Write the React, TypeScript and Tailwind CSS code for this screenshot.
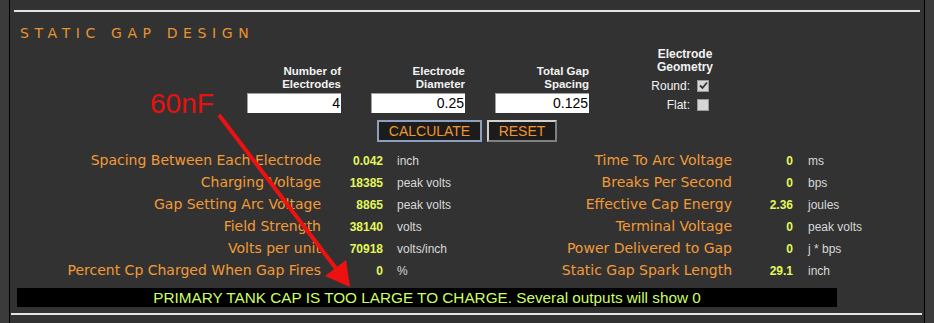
import React from 'react';

const leftRows = [
  ['Spacing Between Each Electrode', '0.042', 'inch'],
  ['Charging Voltage', '18385', 'peak volts'],
  ['Gap Setting Arc Voltage', '8865', 'peak volts'],
  ['Field Strength', '38140', 'volts'],
  ['Volts per unit', '70918', 'volts/inch'],
  ['Percent Cp Charged When Gap Fires', '0', '%'],
];

const rightRows = [
  ['Time To Arc Voltage', '0', 'ms'],
  ['Breaks Per Second', '0', 'bps'],
  ['Effective Cap Energy', '2.36', 'joules'],
  ['Terminal Voltage', '0', 'peak volts'],
  ['Power Delivered to Gap', '0', 'j * bps'],
  ['Static Gap Spark Length', '29.1', 'inch'],
];

const inputs = [
  ['Number of', 'Electrodes', '4'],
  ['Electrode', 'Diameter', '0.25'],
  ['Total Gap', 'Spacing', '0.125'],
];

const Checkbox: React.FC<{ checked?: boolean }> = ({ checked }) => (
  <div className="w-[12px] h-[12px] bg-[#d6d6d6] border border-[#9a9a9a] flex items-center justify-center">
    {checked && (
      <svg width="9" height="9" viewBox="0 0 9 9">
        <path d="M1 4.5 L3.5 7 L8 1.5" stroke="#333" strokeWidth="1.8" fill="none" />
      </svg>
    )}
  </div>
);

const ResultTable: React.FC<{ rows: string[][]; labelW: string; valueW: string; unitPad: string; width: string }> = ({
  rows,
  labelW,
  valueW,
  unitPad,
  width,
}) => (
  <div className={`flex flex-col ${width}`}>
    {rows.map(([label, value, unit]) => (
      <div key={label} className="flex items-baseline h-[22px] leading-[22px] whitespace-nowrap">
        <div className={`${labelW} shrink-0 text-right text-[14px] text-[#f29a36] font-['DejaVu_Sans',sans-serif]`}>{label}</div>
        <div className={`${valueW} shrink-0 text-right text-[12px] font-bold text-[#e2f75a] font-['Liberation_Sans',Arial,sans-serif]`}>
          {value}
        </div>
        <div className={`${unitPad} text-[12px] text-[#d8d8d8] font-['Liberation_Sans',Arial,sans-serif]`}>{unit}</div>
      </div>
    ))}
  </div>
);

export default function App() {
  return (
    <div className="relative w-[934px] h-[323px] bg-[#3b3b3b] flex overflow-hidden font-['Liberation_Sans',Arial,sans-serif]">
      <div className="w-[9px] shrink-0" />
      <div className="w-[916px] shrink-0 h-full bg-[#323232] border-x border-black flex flex-col">
        <div className="pt-[10px] pl-[4px]">
          <div className="h-[2px] w-[906px] bg-[#e4e4e4]" />
        </div>

        <div className="mt-[13px] pl-[10px] text-[14px] leading-[16px] tracking-[5.6px] text-[#e8932f] font-['DejaVu_Sans',sans-serif]">
          STATIC GAP DESIGN
        </div>

        <div className="flex items-start pl-[237px]">
          <div className="flex flex-col mt-[24px]">
            <div className="flex gap-[30px]">
              {inputs.map(([a, b, v]) => (
                <div key={a} className="flex flex-col w-[94px]">
                  <div className="text-right text-[11.5px] leading-[13px] font-bold text-[#f2f2f2]">
                    <div>{a}</div>
                    <div>{b}</div>
                  </div>
                  <div className="mt-[2px] h-[20px] bg-white border-t border-l border-[#a0a0a0] text-right text-[14px] leading-[19px] pr-[1px] text-black">
                    {v}
                  </div>
                </div>
              ))}
            </div>
            <div className="mt-[7px] pl-[130px] flex gap-[5px]">
              <button className="w-[105px] h-[22px] bg-[#1c1c1c] border-2 border-[#8e9fbd] text-[14px] leading-[18px] text-[#f0962c]">
                CALCULATE
              </button>
              <button className="w-[70px] h-[22px] bg-[#1c1c1c] border-2 border-t-[#d0d0d0] border-l-[#d0d0d0] border-b-[#808080] border-r-[#808080] text-[14px] leading-[18px] text-[#f0962c]">
                RESET
              </button>
            </div>
          </div>

          <div className="ml-[61px] mt-[7px] w-[70px] flex flex-col text-[#f2f2f2] text-[12px]">
            <div className="text-center font-bold leading-[13px]">
              <div>Electrode</div>
              <div>Geometry</div>
            </div>
            <div className="mt-[5px] h-[13px] flex items-center justify-end gap-[7px] pr-[11px]">
              <span>Round:</span>
              <Checkbox checked />
            </div>
            <div className="mt-[6px] h-[13px] flex items-center justify-end gap-[7px] pr-[11px]">
              <span>Flat:</span>
              <Checkbox />
            </div>
          </div>
        </div>

        <div className="mt-[7px] flex">
          <ResultTable rows={leftRows} width="w-[450px]" labelW="w-[311px]" valueW="w-[62px]" unitPad="pl-[14px]" />
          <ResultTable rows={rightRows} width="flex-1" labelW="w-[272px]" valueW="w-[61px]" unitPad="pl-[15px]" />
        </div>

        <div className="mt-[7px] ml-[7px] w-[820px] h-[19px] bg-black text-center text-[15.3px] leading-[19px] text-[#ccff66]">
          PRIMARY TANK CAP IS TOO LARGE TO CHARGE. Several outputs will show 0
        </div>

        <div className="mt-[6px] ml-[1px] w-[911px] h-[2px] bg-[#e4e4e4]" />
      </div>
      <div className="flex-1" />

      <div className="absolute left-[150px] top-[90px] text-[28px] leading-[28px] text-[#e81010]">60nF</div>
      <svg className="absolute inset-0 pointer-events-none" width="934" height="323" viewBox="0 0 934 323">
        <line x1="219" y1="115" x2="338" y2="271" stroke="#ee1111" strokeWidth="4" />
        <polygon points="350,287 325,276 346,260" fill="#ee1111" />
      </svg>
    </div>
  );
}
